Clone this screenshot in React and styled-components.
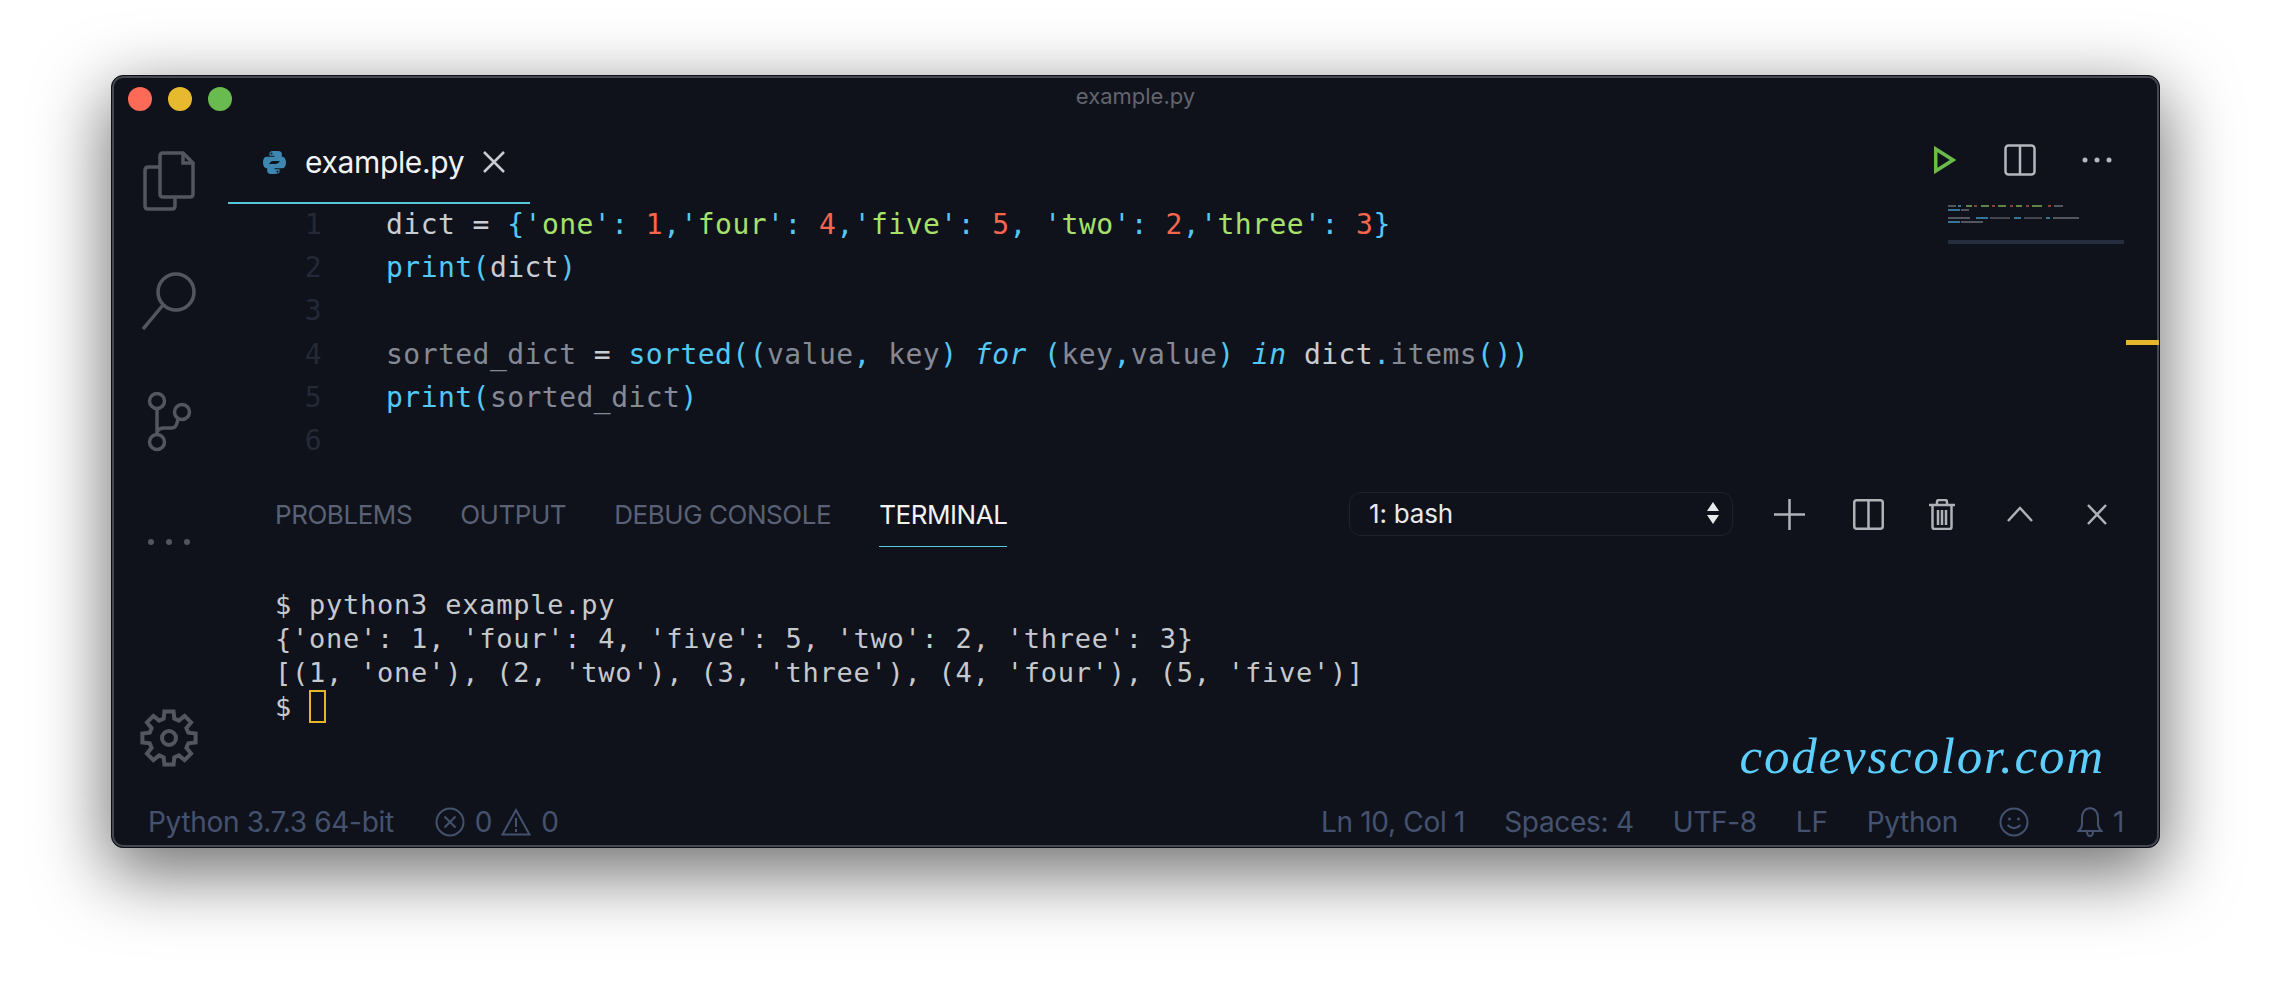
import React from 'react'
import styled, { createGlobalStyle } from 'styled-components'

const mono = `"DejaVu Sans Mono", "Liberation Mono", monospace`
const ui = `Inter, "Noto Sans", sans-serif`

const Global = createGlobalStyle`
  html, body { margin: 0; padding: 0; background: #fff; }
  body { height: 996px; overflow: hidden; }
`

const Page = styled.div`
  padding: 75px 112px 0 111px;
`
const Window = styled.div`
  height: 773px;
  box-sizing: border-box;
  background: #0f121b;
  border: 1px solid #0c0e14;
  border-radius: 12px;
  box-shadow: inset 0 0 0 2px #454852, 0 22px 70px 4px rgba(0, 0, 0, 0.56);
  display: flex;
  flex-direction: column;
  overflow: hidden;
`
const TitleBar = styled.div`
  height: 49px;
  box-sizing: border-box;
  flex: none;
  display: flex;
  align-items: center;
  padding: 0 0 3px 16px;
  gap: 16px;
  position: relative;
`
const Light = styled.span`
  width: 24px;
  height: 24px;
  border-radius: 50%;
  background: ${(p) => p.color};
`
const Title = styled.div`
  position: absolute;
  left: 0;
  right: 0;
  top: 7px;
  text-align: center;
  font: 22px ${ui};
  color: #62656e;
`
const Body = styled.div`
  flex: 1;
  display: flex;
  min-height: 0;
`
const ActivityBar = styled.div`
  width: 116px;
  box-sizing: border-box;
  flex: none;
  display: flex;
  flex-direction: column;
  align-items: center;
  padding: 26px 2px 4px 0;
`
const ActivityIcon = styled.div`
  height: ${(p) => p.h}px;
  width: 70px;
  display: flex;
  justify-content: center;
  align-items: center;
  margin-top: ${(p) => p.mt || 0}px;
`
const Main = styled.div`
  flex: 1;
  min-width: 0;
  display: flex;
  flex-direction: column;
  position: relative;
`
const TabBar = styled.div`
  height: 79px;
  flex: none;
  display: flex;
  align-items: stretch;
  justify-content: space-between;
`
const Tab = styled.div`
  width: 302px;
  height: 79px;
  box-sizing: border-box;
  border-bottom: 2px solid #57c7dc;
  display: flex;
  align-items: center;
  padding: 0 0 3px 34px;
  font: 30px ${ui};
  letter-spacing: -0.35px;
  color: #f1f2f3;
`
const TabName = styled.span`
  margin: 0 19px 0 18px;
`
const TabActions = styled.div`
  display: flex;
  align-items: center;
  padding: 0 47px 9px 0;
`
const Action = styled.span`
  display: flex;
  margin-left: ${(p) => p.ml || 0}px;
`
const Editor = styled.div`
  flex: none;
  height: 257px;
  margin-top: -1px;
  position: relative;
`
const CodeLine = styled.div`
  display: flex;
  height: 43.2px;
  font: 28px/43.2px ${mono};
  letter-spacing: 0.46px;
  white-space: pre;
`
const LineNo = styled.span`
  width: 94px;
  text-align: right;
  color: #232936;
  margin-right: 64px;
`
const Tok = styled.span`
  color: ${(p) => p.c};
  font-style: ${(p) => (p.i ? 'italic' : 'normal')};
`
const Minimap = styled.svg`
  position: absolute;
  left: 1720px;
  top: 1px;
`
const OverviewTick = styled.div`
  position: absolute;
  right: 0;
  top: 137px;
  width: 33px;
  height: 5px;
  background: #e6b52e;
`
const Panel = styled.div`
  flex: 1;
  min-height: 0;
  display: flex;
  flex-direction: column;
  position: relative;
`
const PanelHead = styled.div`
  height: 86px;
  flex: none;
  display: flex;
  align-items: flex-start;
  padding: 32px 52px 0 47px;
`
const PanelTab = styled.div`
  height: 55px;
  box-sizing: border-box;
  display: flex;
  align-items: center;
  margin-right: 48px;
  padding-bottom: 9px;
  font: 26px ${ui};
  letter-spacing: -0.45px;
  color: ${(p) => (p.active ? '#f1f2f3' : '#5a6174')};
  border-bottom: 1px solid ${(p) => (p.active ? '#57c7dc' : 'transparent')};
`
const ShellSelect = styled.div`
  margin-left: auto;
  margin-right: 41px;
  width: 384px;
  height: 44px;
  box-sizing: border-box;
  border: 1px solid #1f222e;
  border-radius: 12px;
  display: flex;
  align-items: center;
  justify-content: space-between;
  padding: 0 12px 2px 19px;
  font: 26px ${ui};
  letter-spacing: -0.2px;
  color: #e8e9eb;
`
const PanelActions = styled.div`
  display: flex;
  align-items: center;
  height: 44px;
`
const Terminal = styled.div`
  padding: 10px 0 0 47px;
  font: 27px/34px ${mono};
  letter-spacing: 0.76px;
  color: #c6c9ce;
  white-space: pre;
`
const Cursor = styled.span`
  display: inline-block;
  width: 17px;
  height: 33px;
  box-sizing: border-box;
  border: 2px solid #e6b52e;
  vertical-align: top;
`
const Watermark = styled.div`
  position: absolute;
  right: 54px;
  bottom: 12px;
  font: italic 51px "Liberation Serif", serif;
  letter-spacing: 1.8px;
  color: #5ccfff;
`
const StatusBar = styled.div`
  height: 50px;
  box-sizing: border-box;
  flex: none;
  display: flex;
  align-items: center;
  justify-content: space-between;
  padding: 0 35px 0 36px;
  font: 28px ${ui};
  letter-spacing: -0.3px;
  color: #44526f;
`
const StatusGroup = styled.div`
  display: flex;
  align-items: center;
  gap: ${(p) => p.gap || 0}px;
`
const StatusItem = styled.span`
  display: flex;
  align-items: center;
  gap: ${(p) => p.gap || 10}px;
  margin-left: ${(p) => p.ml || 0}px;
`

const Sw = ({ w, h, vb, color, sw, children }) => (
  <svg width={w} height={h} viewBox={vb || `0 0 ${w} ${h}`} fill="none" stroke={color} strokeWidth={sw || 3}>
    {children}
  </svg>
)

const PythonLogo = () => (
  <svg width="25" height="25" viewBox="0 0 26 26">
    <path fill="#3d87b0" d="M12.8 1C7.5 1 7.8 3.3 7.8 3.3V6h5.2v1H5C2.600 7 1 9 1 13c0 4 1.900 6 4 6h2.400v-3.200c0-2.300 2-4.300 4.300-4.300h5.500c1.900 0 3.400-1.500 3.400-3.400V3.800C20.600 2 19 1 16 1.100zM9.900 2.600a1 1 0 1 1 0 2.100 1 1 0 0 1 0-2.100z" />
    <path fill="#3d87b0" d="M13.200 25c5.300 0 5-2.300 5-2.300V20H13v-1h8c2.400 0 4-2 4-6s-1.900-6-4-6h-2.400v3.200c0 2.300-2 4.300-4.300 4.300H8.800c-1.900 0-3.400 1.500-3.400 3.400v4.300C5.400 24 7 25 10 24.900zM16.100 23.400a1 1 0 1 1 0-2.100 1 1 0 0 1 0 2.100z" />
  </svg>
)

// eight square teeth, one pointing straight up
const gearPath = () => {
  const pts = []
  for (let i = 0; i < 8; i++) {
    const a = (i * 45 - 90) * (Math.PI / 180)
    const wide = 0.27
    const narrow = 0.17
    pts.push([a - wide, 20], [a - narrow, 27], [a + narrow, 27], [a + wide, 20])
  }
  return pts
    .map(([a, r], i) => `${i ? 'L' : 'M'}${(29 + r * Math.cos(a)).toFixed(2)} ${(29 + r * Math.sin(a)).toFixed(2)}`)
    .join('') + 'z'
}

const c = { base: '#c9ccd2', dim: '#858995', cyan: '#54c8f5', green: '#a8e06c', red: '#f5664f' }

const code = [
  [
    ['dict ', c.base], ['= ', c.base], ['{', c.cyan], ["'", c.cyan], ['one', c.green], ["'", c.cyan], [': ', c.cyan], ['1', c.red], [',', c.cyan],
    ["'", c.cyan], ['four', c.green], ["'", c.cyan], [': ', c.cyan], ['4', c.red], [',', c.cyan],
    ["'", c.cyan], ['five', c.green], ["'", c.cyan], [': ', c.cyan], ['5', c.red], [', ', c.cyan],
    ["'", c.cyan], ['two', c.green], ["'", c.cyan], [': ', c.cyan], ['2', c.red], [',', c.cyan],
    ["'", c.cyan], ['three', c.green], ["'", c.cyan], [': ', c.cyan], ['3', c.red], ['}', c.cyan],
  ],
  [['print', c.cyan], ['(', c.cyan], ['dict', c.base], [')', c.cyan]],
  [],
  [
    ['sorted_dict ', c.dim], ['= ', c.base], ['sorted', c.cyan], ['((', c.cyan], ['value', c.dim], [', ', c.cyan], ['key', c.dim], [') ', c.cyan],
    ['for', c.cyan, true], [' (', c.cyan], ['key', c.dim], [',', c.cyan], ['value', c.dim], [') ', c.cyan],
    ['in', c.cyan, true], [' ', c.cyan], ['dict', c.base], ['.', c.cyan], ['items', c.dim], ['())', c.cyan],
  ],
  [['print', c.cyan], ['(', c.cyan], ['sorted_dict', c.dim], [')', c.cyan]],
  [],
]

const miniRows = [
  [[0, 8, '#8b8f98'], [10, 3, '#54c8f5'], [18, 6, '#a8e06c'], [26, 3, '#f5664f'], [33, 8, '#a8e06c'], [44, 3, '#f5664f'], [50, 8, '#a8e06c'], [62, 3, '#f5664f'], [68, 6, '#a8e06c'], [78, 3, '#f5664f'], [84, 10, '#a8e06c'], [100, 3, '#f5664f'], [106, 9, '#8b8f98']],
  [[0, 12, '#54c8f5'], [13, 8, '#8b8f98']],
  [],
  [[0, 22, '#8b8f98'], [28, 12, '#54c8f5'], [42, 20, '#6e7380'], [66, 7, '#54c8f5'], [76, 18, '#6e7380'], [98, 4, '#54c8f5'], [105, 26, '#8b8f98']],
  [[0, 12, '#54c8f5'], [13, 22, '#8b8f98']],
]

const App = () => (
  <>
    <Global />
    <Page>
      <Window>
        <TitleBar>
          <Light color="#fe6a58" />
          <Light color="#e6b92f" />
          <Light color="#6abb4f" />
          <Title>example.py</Title>
        </TitleBar>
        <Body>
          <ActivityBar>
            <ActivityIcon h={60}>
              <Sw w={52} h={60} color="#53565f" sw={3.500}>
                <path d="M16 16H5.500Q2 16 2 19.500V55q0 3 3 3h24q3 0 3-3v-9" />
                <path d="M17 5q0-3 3-3h20l10 10v31q0 3-3 3H20q-3 0-3-3z" />
                <path d="M40 2v10h10" />
              </Sw>
            </ActivityIcon>
            <ActivityIcon h={60} mt={60}>
              <Sw w={56} h={58} color="#53565f" sw={3.500}>
                <circle cx="35" cy="20" r="18" />
                <path d="M22 33 2 57" />
              </Sw>
            </ActivityIcon>
            <ActivityIcon h={60} mt={61}>
              <Sw w={46} h={60} color="#53565f" sw={3.500}>
                <circle cx="11" cy="9" r="7.500" />
                <circle cx="11" cy="50" r="7.500" />
                <circle cx="36" cy="20" r="7.500" />
                <path d="M11 17v25M11 40q2-4 7-4h8q5 0 6-10" />
              </Sw>
            </ActivityIcon>
            <ActivityIcon h={20} mt={80}>
              <Sw w={46} h={8} color="none">
                <circle cx="5" cy="4" r="3" fill="#53565f" />
                <circle cx="23" cy="4" r="3" fill="#53565f" />
                <circle cx="41" cy="4" r="3" fill="#53565f" />
              </Sw>
            </ActivityIcon>
            <ActivityIcon h={60} mt={156}>
              <Sw w={58} h={58} color="#53565f" sw={4}>
                <path d={gearPath()} />
                <circle cx="29" cy="29" r="7" />
              </Sw>
            </ActivityIcon>
          </ActivityBar>
          <Main>
            <TabBar>
              <Tab>
                <PythonLogo />
                <TabName>example.py</TabName>
                <Sw w={22} h={22} color="#c9cbd0" sw={2.500}>
                  <path d="M1 1l20 20M21 1 1 21" />
                </Sw>
              </Tab>
              <TabActions>
                <Action>
                  <Sw w={22} h={28} color="#69bb4a" sw={3.500}>
                    <path d="M1.750 3v22L19 14z" />
                  </Sw>
                </Action>
                <Action ml={48}>
                  <Sw w={32} h={32} color="#b5b7bd" sw={2.500}>
                    <rect x="1.500" y="1.500" width="29" height="29" rx="3" />
                    <path d="M16 1.500v29" />
                  </Sw>
                </Action>
                <Action ml={46}>
                  <Sw w={30} h={6} color="none">
                    <circle cx="3" cy="3" r="2.500" fill="#b5b7bd" />
                    <circle cx="15" cy="3" r="2.500" fill="#b5b7bd" />
                    <circle cx="27" cy="3" r="2.500" fill="#b5b7bd" />
                  </Sw>
                </Action>
              </TabActions>
            </TabBar>
            <Editor>
              {code.map((tokens, i) => (
                <CodeLine key={i}>
                  <LineNo>{i + 1}</LineNo>
                  {tokens.map(([text, color, italic], j) => (
                    <Tok key={j} c={color} i={italic}>{text}</Tok>
                  ))}
                </CodeLine>
              ))}
              <Minimap width="178" height="44" viewBox="0 0 178 44">
                {miniRows.map((row, y) =>
                  row.map(([x, w, fill], k) => (
                    <rect key={`${y}-${k}`} x={x} y={y * 4 + 1} width={w} height="2" fill={fill} opacity="0.55" />
                  )),
                )}
                <rect x="0" y="36" width="176" height="4" fill="#252d3f" />
              </Minimap>
              <OverviewTick />
            </Editor>
            <Panel>
              <PanelHead>
                <PanelTab>PROBLEMS</PanelTab>
                <PanelTab>OUTPUT</PanelTab>
                <PanelTab>DEBUG CONSOLE</PanelTab>
                <PanelTab active>TERMINAL</PanelTab>
                <ShellSelect>
                  1: bash
                  <Sw w={14} h={24} color="none">
                    <path d="M7 1l6 9H1zM7 23l6-9H1z" fill="#e8e9eb" />
                  </Sw>
                </ShellSelect>
                <PanelActions>
                  <Action>
                    <Sw w={31} h={31} color="#b0b2b8" sw={2.500}>
                      <path d="M15.500 0v31M0 15.500h31" />
                    </Sw>
                  </Action>
                  <Action ml={48}>
                    <Sw w={31} h={31} color="#b0b2b8" sw={2.500}>
                      <rect x="1.250" y="1.250" width="28.500" height="28.500" rx="2.500" />
                      <path d="M15.500 1v29" />
                    </Sw>
                  </Action>
                  <Action ml={45}>
                    <Sw w={26} h={31} color="#b0b2b8" sw={2.500}>
                      <path d="M0 6h26M3.500 6v22q0 2 2 2h15q2 0 2-2V6M8 6V3q0-2 2-2h6q2 0 2 2v3M9 11v15M13 11v15M17 11v15" />
                    </Sw>
                  </Action>
                  <Action ml={52}>
                    <Sw w={26} h={16} color="#b0b2b8" sw={2.500}>
                      <path d="M1 15 13 2l12 13" />
                    </Sw>
                  </Action>
                  <Action ml={54}>
                    <Sw w={20} h={21} color="#b0b2b8" sw={2.500}>
                      <path d="M1 1l18 19M19 1 1 20" />
                    </Sw>
                  </Action>
                </PanelActions>
              </PanelHead>
              <Terminal>
                {`$ python3 example.py\n{'one': 1, 'four': 4, 'five': 5, 'two': 2, 'three': 3}\n[(1, 'one'), (2, 'two'), (3, 'three'), (4, 'four'), (5, 'five')]\n$ `}
                <Cursor />
              </Terminal>
              <Watermark>codevscolor.com</Watermark>
            </Panel>
          </Main>
        </Body>
        <StatusBar>
          <StatusGroup gap={41}>
            <span>Python 3.7.3 64-bit</span>
            <StatusGroup gap={9}>
              <StatusItem>
                <Sw w={30} h={30} color="#44526f" sw={2}>
                  <circle cx="15" cy="15" r="13.500" />
                  <path d="M9.500 9.500l11 11M20.500 9.500l-11 11" />
                </Sw>
                0
              </StatusItem>
              <StatusItem>
                <Sw w={30} h={28} color="#44526f" sw={2}>
                  <path d="M15 2 1.500 26.500h27zM15 10v9M15 21v3" />
                </Sw>
                0
              </StatusItem>
            </StatusGroup>
          </StatusGroup>
          <StatusGroup gap={41}>
            <StatusGroup gap={39}>
              <span>Ln 10, Col 1</span>
              <span>Spaces: 4</span>
              <span>UTF-8</span>
              <span>LF</span>
              <span>Python</span>
            </StatusGroup>
            <Sw w={30} h={30} color="#44526f" sw={2}>
              <circle cx="15" cy="15" r="13.500" />
              <circle cx="10.500" cy="12" r="1.500" fill="#44526f" stroke="none" />
              <circle cx="19.500" cy="12" r="1.500" fill="#44526f" stroke="none" />
              <path d="M8.500 18q6.500 6.500 13 0" />
            </Sw>
            <StatusItem ml={7}>
              <Sw w={26} h={32} color="#44526f" sw={2}>
                <path d="M1.500 25q3.500-3 3.500-7v-6q0-9 8-10 8 1 8 10v6q0 4 3.500 7zM10 25q0 5 3 5t3-5" />
              </Sw>
              1
            </StatusItem>
          </StatusGroup>
        </StatusBar>
      </Window>
    </Page>
  </>
)

export default App
